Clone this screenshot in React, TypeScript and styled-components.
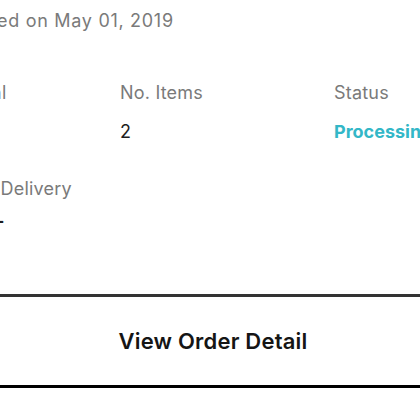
import React from "react";
import styled, { createGlobalStyle } from "styled-components";

const Global = createGlobalStyle`
  html, body { margin: 0; padding: 0; background: #fff; overflow: hidden; }
  body { font-family: Inter, "Liberation Sans", sans-serif; width: 420px; height: 420px; }
`;

const Card = styled.div`
  margin-left: -86px;
  width: 598px;
  display: flex;
  flex-direction: column;
`;

const Summary = styled.div`
  padding-left: 50px;
  display: flex;
  flex-direction: column;
`;

const Placed = styled.div`
  margin-top: 9px;
  margin-left: -6px;
  font-size: 18px;
  line-height: 24px;
  letter-spacing: 0.7px;
  color: #7a7a7a;
  white-space: nowrap;
`;

const Grid = styled.div`
  margin-top: 48px;
  display: grid;
  grid-template-columns: 156px 214px auto;
  row-gap: 15px;
`;

const Label = styled.div`
  font-size: 18px;
  line-height: 24px;
  letter-spacing: 0.2px;
  color: #7a7a7a;
  white-space: nowrap;
`;

const Value = styled.div<{ $accent?: boolean }>`
  font-size: 18px;
  line-height: 24px;
  font-weight: ${(p) => (p.$accent ? 700 : 400)};
  color: ${(p) => (p.$accent ? "#33b7c7" : "#1e1e1e")};
  white-space: nowrap;
`;

const Delivery = styled.div`
  margin-top: 33px;
  display: flex;
  flex-direction: column;
  gap: 8px;
`;

const Estimate = styled(Value)`
  padding-left: 82px;
  font-weight: 700;
`;

const Button = styled.button`
  margin-top: 61px;
  height: 94px;
  width: 100%;
  box-sizing: border-box;
  background: #fff;
  border: none;
  border-top: 3px solid #333;
  border-bottom: 3px solid #000;
  font-family: Inter, "Liberation Sans", sans-serif;
  font-size: 22px;
  font-weight: 600;
  letter-spacing: 0.2px;
  color: #151515;
  cursor: pointer;
  padding: 0;
`;

export default function App() {
  return (
    <>
      <Global />
      <Card>
        <Summary>
          <Placed>Placed on May 01, 2019</Placed>
          <Grid>
            <Label>Total</Label>
            <Label>No. Items</Label>
            <Label>Status</Label>
            <Value>$25</Value>
            <Value>2</Value>
            <Value $accent>Processing</Value>
          </Grid>
        </Summary>
        <Delivery>
          <Label>Expected Delivery</Label>
          <Estimate>-</Estimate>
        </Delivery>
        <Button>View Order Detail</Button>
      </Card>
    </>
  );
}
